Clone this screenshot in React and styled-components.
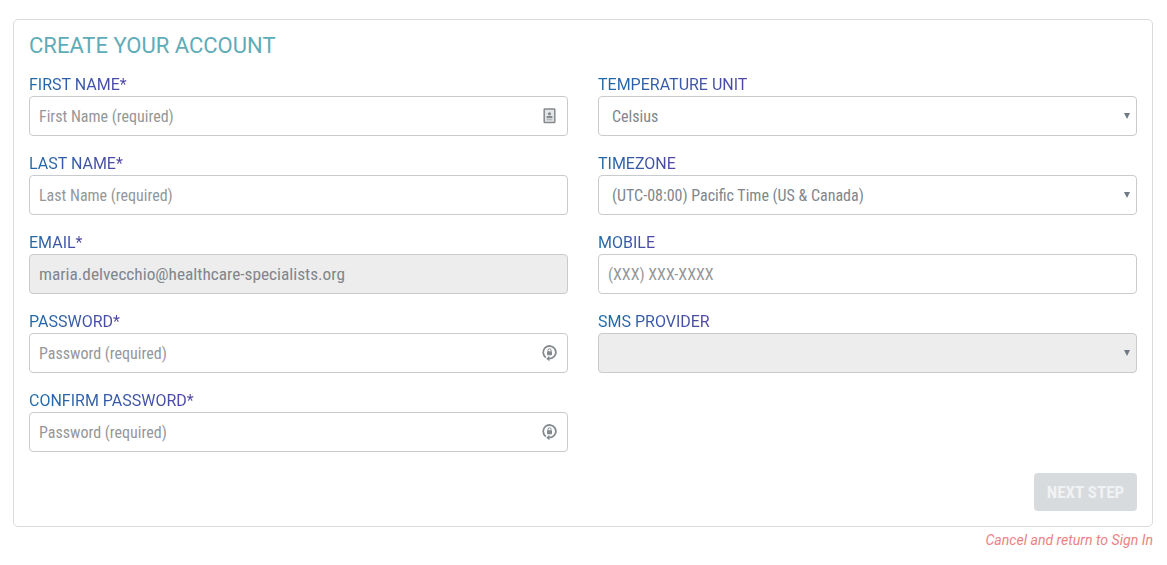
import React from "react";
import styled, { createGlobalStyle } from "styled-components";

const Global = createGlobalStyle`
  html, body { margin: 0; padding: 0; background: #fff; }
  * { box-sizing: border-box; }
  body { font-family: Roboto, sans-serif; }
`;
const Page = styled.div`
  width: 1167px; height: 565px; padding: 19px 14px 0 13px; overflow: hidden;
`;
const Card = styled.form`
  height: 508px; border: 1px solid #d8dcdf; border-radius: 5px; padding: 11px 15px 0;
  display: flex; flex-direction: column;
`;
const Title = styled.h1`
  margin: 0; height: 32px; font-size: 22px; font-weight: 400; line-height: 30px; color: #5eacb8;
`;
const Grid = styled.div`
  display: grid; grid-template-columns: 539px 539px; column-gap: 30px; margin-top: 11px;
`;
const Column = styled.div`display: flex; flex-direction: column; gap: 17px;`;
const Field = styled.div`display: flex; flex-direction: column;`;
const Label = styled.label`
  height: 22px; font-size: 16px; line-height: 22px; color: #3a5ba0;
  background: linear-gradient(90deg, #1d6ba8, #5046a6); -webkit-background-clip: text; background-clip: text; -webkit-text-fill-color: transparent;
  width: fit-content;
`;
const InputWrap = styled.div`position: relative; height: 40px;`;
const Input = styled.input`
  width: 100%; height: 40px; border: 1px solid #c8cbcd; border-radius: 4px; padding: 0 9px;
  font-family: "Roboto Condensed", Roboto, sans-serif; font-size: 16px; color: #80868c; outline: none;
  background: ${p => p.disabled ? "#ededed" : "#fff"};
  &::placeholder { color: #94979a; opacity: 1; }
  &:disabled { color: #80868c; -webkit-text-fill-color: #80868c; font-size: 17.3px; }
`;
const Select = styled.select`
  width: 100%; height: 40px; border: 1px solid #c8cbcd; border-radius: 4px; padding: 0 9px 0 13px;
  font-family: "Roboto Condensed", Roboto, sans-serif; font-size: 16px; color: #80868c; appearance: none; outline: none;
  background: ${p => p.disabled ? "#ededed" : "#fff"};
  opacity: 1;
`;
const Caret = styled.span`
  position: absolute; right: 7px; top: 17px; width: 0; height: 0;
  border-left: 3px solid transparent; border-right: 3px solid transparent; border-top: 6px solid #6f7a86;
`;
const IconSlot = styled.span`position: absolute; right: 11px; top: 11px; width: 15px; height: 18px; color: #858a8e;`;
const Footer = styled.div`display: flex; justify-content: flex-end; margin-top: 21px;`;
const NextButton = styled.button`
  width: 103px; height: 38px; border: 0; border-radius: 4px; background: #d8dbde; color: #f1f2f3;
  font-family: "Roboto Condensed", Roboto, sans-serif; font-size: 17px; font-weight: 700;
`;
const CancelRow = styled.div`
  text-align: right; font-size: 14.1px; font-style: italic; line-height: 18px; color: #ea8285; margin-top: 4px;
`;
const IdIcon = () => (
  <svg width="15" height="18" viewBox="0 0 15 18" fill="none" stroke="currentColor">
    <rect x="2.2" y="2" width="10.6" height="13.6" rx="0.6" strokeWidth="1.5" fill="#e4e5e6" />
    <circle cx="7.5" cy="6.800" r="1.6" fill="currentColor" stroke="none" />
    <rect x="4.600" y="9" width="5.800" height="2.200" fill="currentColor" stroke="none" />
    <rect x="4.600" y="12" width="5.800" height="1.400" fill="#b5b8ba" stroke="none" />
  </svg>
);
const KeyIcon = () => (
  <svg width="15" height="18" viewBox="0 0 15 18" fill="none" stroke="currentColor">
    <path d="M3.800 13.400A6.300 6.300 0 1 1 9.800 14.200L6.800 14.600" strokeWidth="1.800" />
    <path d="M7.400 11.800L4.200 14.700L7.400 17.200z" fill="currentColor" stroke="none" />
    <rect x="5" y="7.200" width="5" height="4" rx=".6" fill="currentColor" stroke="none" />
    <path d="M6 7.500V6.200a1.500 1.500 0 0 1 3 0v1.300" strokeWidth="1" />
  </svg>
);
const TextField = ({ label, placeholder, value, disabled, icon }) => (
  <Field>
    <Label>{label}</Label>
    <InputWrap>
      <Input placeholder={placeholder} defaultValue={value} disabled={disabled} />
      {icon && <IconSlot>{icon}</IconSlot>}
    </InputWrap>
  </Field>
);
const SelectField = ({ label, value, disabled }) => (
  <Field>
    <Label>{label}</Label>
    <InputWrap>
      <Select defaultValue={value} disabled={disabled}>
        <option>{value}</option>
      </Select>
      <Caret />
    </InputWrap>
  </Field>
);
export default function App() {
  return (
    <Page>
      <Global />
      <Card>
        <Title>CREATE YOUR ACCOUNT</Title>
        <Grid>
          <Column>
            <TextField label="FIRST NAME*" placeholder="First Name (required)" icon={<IdIcon />} />
            <TextField label="LAST NAME*" placeholder="Last Name (required)" />
            <TextField label="EMAIL*" value="maria.delvecchio@healthcare-specialists.org" disabled />
            <TextField label="PASSWORD*" placeholder="Password (required)" icon={<KeyIcon />} />
            <TextField label="CONFIRM PASSWORD*" placeholder="Password (required)" icon={<KeyIcon />} />
          </Column>
          <Column>
            <SelectField label="TEMPERATURE UNIT" value="Celsius" />
            <SelectField label="TIMEZONE" value="(UTC-08:00) Pacific Time (US & Canada)" />
            <TextField label="MOBILE" placeholder="(XXX) XXX-XXXX" />
            <SelectField label="SMS PROVIDER" value="" disabled />
          </Column>
        </Grid>
        <Footer><NextButton type="button">NEXT STEP</NextButton></Footer>
      </Card>
      <CancelRow>Cancel and return to Sign In</CancelRow>
    </Page>
  );
}
